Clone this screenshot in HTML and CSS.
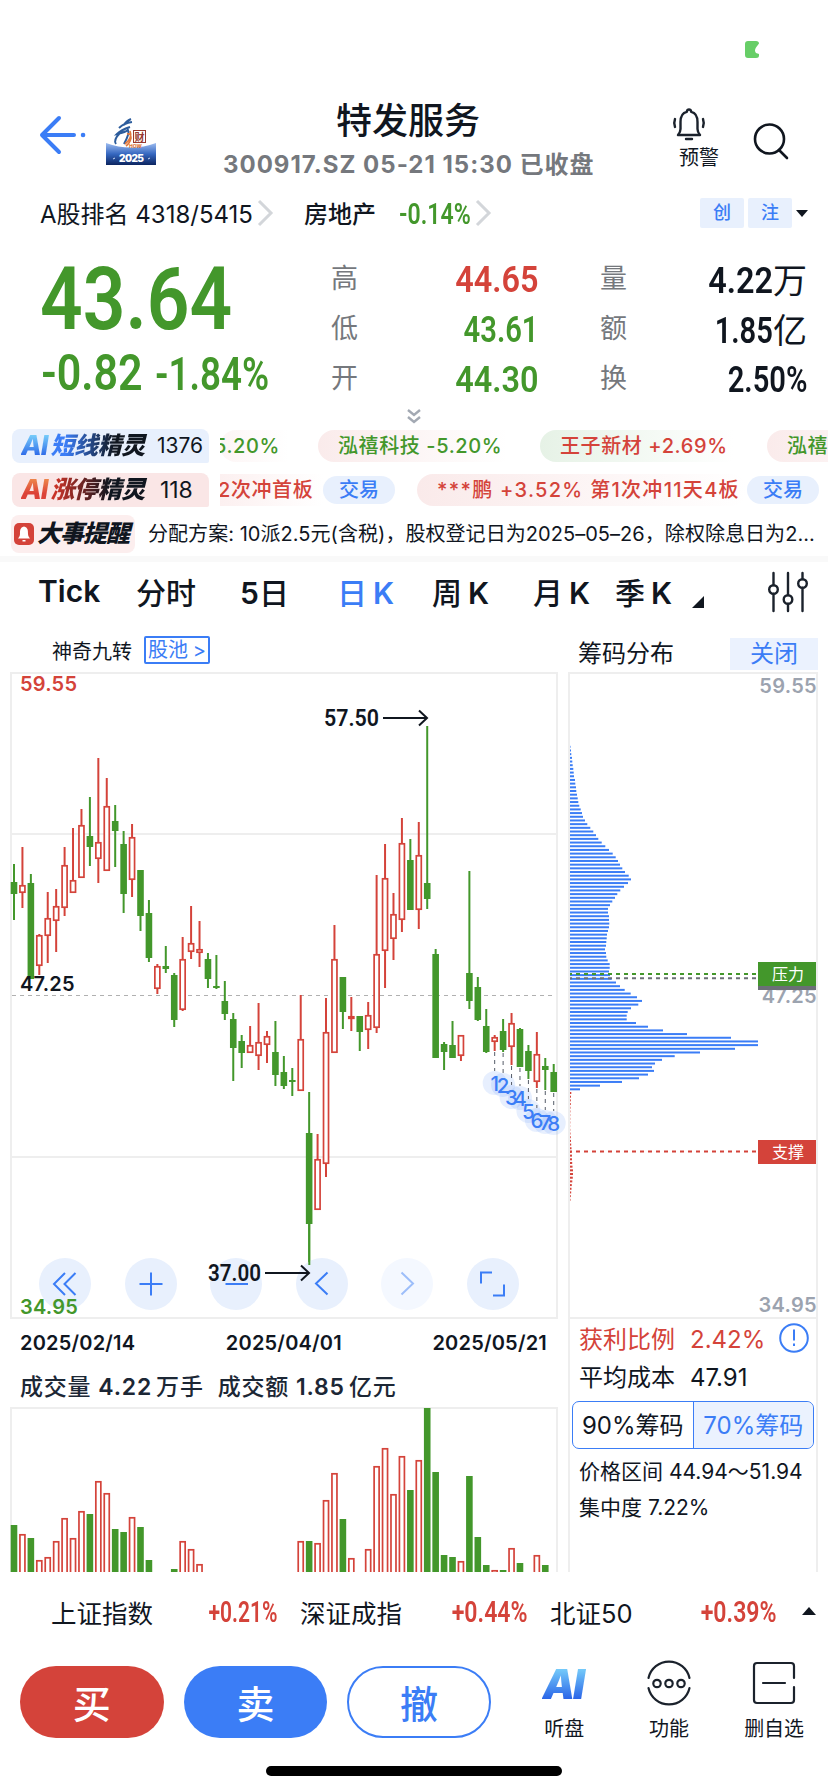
FILE: index.html
```html
<!DOCTYPE html>
<html lang="zh-CN">
<head>
  <meta charset="UTF-8">
  <title>特发服务</title>
  <meta name="viewport" content="width=device-width, initial-scale=1">
  <link rel="stylesheet" href="styles.css">
</head>
<body>
<div class="status">
  <svg width="14" height="17" viewBox="0 0 14 17"><path d="M3 0h8q3 0 3 2.500l-3 4q-2 3 0 5.500l3 1v1.500q0 2.500-3 2.500H3q-3 0-3-3V3q0-3 3-3z" fill="#67ce67"/></svg>
</div>

<header class="header">
  <div class="header-left">
    <svg class="back" width="48" height="40" viewBox="0 0 48 40" fill="none" stroke="#3b7df6" stroke-width="4" stroke-linecap="round" stroke-linejoin="round">
      <path d="M20 3L3 20l17 17M3 20h32"/><path d="M44 20h.1" stroke-width="4.500"/>
    </svg>
    <svg class="logo" width="50" height="47" viewBox="0 0 50 47">
      <defs><linearGradient id="lg" x1="0" y1="0" x2="0" y2="1"><stop offset="0" stop-color="#9dbcf0"/><stop offset=".5" stop-color="#3567c0"/><stop offset="1" stop-color="#0c2560"/></linearGradient></defs>
      <path d="M0 25q25 9 50 0v22H0z" fill="url(#lg)"/>
      <path d="M25 1q-5 2-7 6M26 4q-8 1-13 6M24 9q-9 3-13 7q9-2 11-4q2 3-4 14M14 15q-7 7-4 11" fill="none" stroke="#2c5c9c" stroke-width="2"/>
      <path d="M24 13q3 7-5 13M21 16q4-1 4 4q-1 5-5 8" fill="none" stroke="#e0783c" stroke-width="1.600"/>
      <rect x="27.500" y="12.500" width="12" height="12" fill="#fff" stroke="#983a30"/>
      <text x="28.500" y="22.500" class="logo-cai">财</text>
      <text x="23" y="30" class="logo-how">HOW</text>
      <text x="13" y="44" class="logo-year" textLength="25">2025</text>
      <path d="M7 41l2-1M42 41l2-1" stroke="#cfdcf5"/>
    </svg>
  </div>
  <div class="header-title">
    <h1>特发服务</h1>
    <p>300917.SZ 05-21 15:30 已收盘</p>
  </div>
  <div class="header-right">
    <div class="alert">
      <svg width="34" height="34" viewBox="0 0 34 34" fill="none" stroke="#1b222c" stroke-width="2.400" stroke-linecap="round" stroke-linejoin="round">
        <path d="M17 2.500q-1.800 0-2.200 2.300C9.500 6 8.500 10 8.500 15v7q0 3-2.500 6h22q-2.500-3-2.500-6v-7c0-5-1-9-6.300-10.200Q18.800 2.500 17 2.500z"/>
        <path d="M14 32h6M3 12q-1.500 4 0 8M31 12q1.500 4 0 8"/>
      </svg>
      <span>预警</span>
    </div>
    <svg class="search" width="36" height="38" viewBox="0 0 36 38" fill="none" stroke="#10161f" stroke-width="2.600" stroke-linecap="round"><circle cx="16.500" cy="17" r="14.500"/><path d="M26 28l8 8"/></svg>
  </div>
</header>

<div class="rank">
  <span class="rank-all">A股排名 4318/5415</span>
  <svg class="chev" width="18" height="28" viewBox="0 0 18 28"><path d="M3 2l12 12L3 26"/></svg>
  <span class="rank-sector">房地产</span>
  <span class="din rank-pct green">-0.14%</span>
  <svg class="chev" width="18" height="28" viewBox="0 0 18 28"><path d="M3 2l12 12L3 26"/></svg>
  <div class="tags"><b>创</b><b>注</b><i></i></div>
</div>

<section class="quote">
  <div class="price">
    <div class="din price-now">43.64</div>
    <div class="price-diff"><span class="din d1">-0.82</span><span class="din d2">-1.84%</span></div>
  </div>
  <dl class="stats">
    <dt>高</dt><dd class="red"><span class="din">44.65</span></dd>
    <dt>低</dt><dd class="green"><span class="din narrow">43.61</span></dd>
    <dt>开</dt><dd class="green"><span class="din">44.30</span></dd>
  </dl>
  <dl class="stats stats-2">
    <dt>量</dt><dd><span class="din">4.22</span><em>万</em></dd>
    <dt>额</dt><dd><span class="din narrow">1.85</span><em>亿</em></dd>
    <dt>换</dt><dd><span class="din narrow">2.50%</span></dd>
  </dl>
</section>
<div class="expand">
  <svg width="14" height="17" viewBox="0 0 14 17" fill="none" stroke="#a3a9b3" stroke-width="2.400"><path d="M1 2l6 5 6-5M1 9l6 5 6-5"/></svg>
</div>

<section class="tickers">
  <div class="ticker">
    <div class="ticker-label blue-bg"><b class="ai ai-blue">AI</b><b class="name name-blue">短线精灵</b><span>1376</span></div>
    <div class="ticker-track">
      <span class="chip c-first green">5.20%</span>
      <span class="chip c-red green">泓禧科技 -5.20%</span>
      <span class="chip c-green red">王子新材 +2.69%</span>
      <span class="chip c-red green">泓禧科技</span>
    </div>
  </div>
  <div class="ticker">
    <div class="ticker-label red-bg"><b class="ai ai-red">AI</b><b class="name name-red">涨停精灵</b><span class="n118">118</span></div>
    <div class="ticker-track track-2">
      <span class="chip b-first red">2次冲首板</span><span class="trade">交易</span>
      <span class="chip b-long red">***鹏 +3.52% 第1次冲11天4板</span><span class="trade">交易</span>
    </div>
  </div>
  <div class="ticker notice">
    <div class="notice-label">
      <svg width="20" height="22" viewBox="0 0 20 22"><rect width="20" height="22" rx="5" fill="#d4433a"/><path d="M10 3.500c-4 1-4 4-4 7.500 0 2-1 3-2 4.500h12c-1-1.500-2-2.500-2-4.500 0-3.500 0-6.500-4-7.500zM8.500 17h3v1.500h-3z" fill="#fff"/></svg>
      <b>大事提醒</b>
    </div>
    <p>分配方案: 10派2.5元(含税)，股权登记日为2025–05–26，除权除息日为2...</p>
  </div>
</section>

<nav class="tabs">
  <span class="t1"><b>Tick</b></span><span class="t2">分时</span><span class="t3"><b>5</b>日</span><span class="t4 on">日 <b>K</b></span><span class="t5">周 <b>K</b></span><span class="t6">月 <b>K</b></span><span class="t7">季 <b>K</b></span>
  <i class="corner"></i>
  <svg width="42" height="42" viewBox="0 0 42 42" fill="none" stroke="#1b222c" stroke-width="2.400" stroke-linecap="round">
    <path d="M6.500 2v12M6.500 23v17M21 2v22M21 33v7M35.500 2v6M35.500 17v23"/><circle cx="6.500" cy="18.500" r="4.300"/><circle cx="21" cy="28.500" r="4.300"/><circle cx="35.500" cy="12.500" r="4.300"/>
  </svg>
</nav>

<main class="charts">
  <div class="col-k">
    <div class="k-head"><span>神奇九转</span><a>股池 &gt;</a></div>
    <svg id="kline" class="block" width="548" height="648" viewBox="10 672 548 648"></svg>
    <div class="dates"><span>2025/02/14</span><span>2025/04/01</span><span>2025/05/21</span></div>
    <div class="vol-head">成交量 <b>4.22</b><s></s>万手<s class="wide"></s>成交额 <b>1.85</b><s></s>亿元</div>
    <svg id="volume" class="block" width="548" height="166" viewBox="10 1406 548 166"></svg>
  </div>
  <div class="col-chip">
    <div class="chip-head"><span>筹码分布</span><a>关闭</a></div>
    <svg id="chips" class="block" width="250" height="648" viewBox="568 672 250 648"></svg>
    <div class="chip-info">
      <div class="profit"><span>获利比例</span><span>2.42%</span>
        <svg width="30" height="30" viewBox="0 0 30 30" fill="none" stroke="#3b7df6" stroke-width="2"><circle cx="15" cy="15" r="13.800"/><path d="M15 6.500v11M15 20.500v2.500"/></svg>
      </div>
      <div class="cost"><span>平均成本</span><span>47.91</span></div>
      <div class="switch"><span>90%筹码</span><span class="on">70%筹码</span></div>
      <p>价格区间 44.94～51.94</p>
      <p>集中度 7.22%</p>
    </div>
  </div>
</main>

<div class="indices">
  <div class="i1"><span>上证指数</span><span class="din red">+0.21%</span></div>
  <div class="i2"><span>深证成指</span><span class="din red">+0.44%</span></div>
  <div class="i3"><span>北证50</span><span class="din red">+0.39%</span></div>
  <i></i>
</div>

<footer class="actions">
  <button class="buy">买</button>
  <button class="sell">卖</button>
  <button class="cancel">撤</button>
  <div class="act a1"><b class="ai ai-blue">AI</b><span>听盘</span></div>
  <div class="act a2">
    <svg width="46" height="46" viewBox="0 0 46 46" fill="none" stroke="#1b222c" stroke-width="2.200" stroke-linecap="round"><path d="M2.500 18a21 21 0 0 1 41 0M2.500 28a21 21 0 0 0 41 0"/><circle cx="11" cy="23.500" r="3.700"/><circle cx="23" cy="23.500" r="3.700"/><circle cx="35" cy="23.500" r="3.700"/></svg>
    <span>功能</span>
  </div>
  <div class="act a3">
    <svg width="46" height="46" viewBox="0 0 46 46" fill="none" stroke="#1b222c" stroke-width="2.200" stroke-linecap="round"><path d="M43 18V6q0-3-3-3H6Q3 3 3 6v34q0 3 3 3h34q3 0 3-3V27M12 23h22"/></svg>
    <span>删自选</span>
  </div>
</footer>
<div class="home"></div>
<script src="script.js"></script>
</body>
</html>
```
FILE: styles.css
```css
* { box-sizing: border-box; }
body {
  margin: 0;
  width: 828px;
  height: 1792px;
  overflow: hidden;
  background: #fff;
  color: #10161f;
  font-family: Inter, "Noto Sans CJK SC", sans-serif;
}
h1, p, dl, dd, dt { margin: 0; font-weight: inherit; }
.red { color: #d4433a; }
.green { color: #43972b; }
.block { display: block; overflow: visible; }
.din {
  font-family: Roboto, "Noto Sans CJK SC", sans-serif;
  font-weight: 600;
  display: inline-block;
  transform: scaleX(.88);
  transform-origin: left;
  white-space: nowrap;
}
.status {
  height: 90px;
  padding: 41px 0 0 745px;
}
.status svg { display: block; }

/* header */
.header {
  height: 100px;
  display: flex;
}
.header-left {
  width: 223px;
  padding: 25px 0 0 39px;
  display: flex;
}
.logo { margin: 3px 0 0 19px; }
.logo-cai { font-size: 10px; font-weight: 700; fill: #983a30; }
.logo-how { font-size: 5px; font-weight: 800; fill: #e0783c; }
.logo-year { font-size: 10px; font-weight: 900; fill: #fff; }
.header-title {
  width: 370px;
  text-align: center;
  white-space: nowrap;
}
.header-title h1 {
  font-size: 36px;
  line-height: 44px;
  margin-top: 9px;
  font-weight: 500;
}
.header-title p {
  font-size: 24px;
  line-height: 30px;
  margin-top: 7px;
  font-weight: 700;
  color: #75787d;
  letter-spacing: 1px;
}
.header-right {
  display: flex;
  padding: 17px 0 0 79px;
}
.alert {
  width: 50px;
  font-size: 20px;
  line-height: 24px;
}
.alert svg { display: block; margin-bottom: 5px; }
.alert span { margin-left: 7px; }
.search { margin: 15px 0 0 31px; }

/* rank row */
.rank {
  height: 46px;
  padding-left: 40px;
  display: flex;
  align-items: center;
  font-size: 24px;
  white-space: nowrap;
}
.rank-all { width: 216px; padding-bottom: 2px; }
.chev { fill: none; stroke: #d3d6da; stroke-width: 3; }
.rank-sector { font-weight: 500; margin-left: 30px; width: 95px; padding-bottom: 2px; }
.rank-pct { font-size: 30px; width: 75px; transform: scaleX(.77); }
.tags {
  margin-left: 208px;
  display: flex;
  gap: 4px;
  align-items: center;
}
.tags b {
  width: 44px;
  height: 30px;
  line-height: 29px;
  text-align: center;
  font-size: 18px;
  font-weight: 500;
  background: #e8f0fd;
  color: #3b7df6;
  border-radius: 2px;
}
.tags i {
  border: 6px solid transparent;
  border-top: 7px solid #10161f;
  border-bottom: 0;
}

/* quote */
.quote {
  height: 172px;
  display: flex;
  padding: 18px 0 0 40px;
}
.price { width: 291px; color: #43972b; }
.price-now {
  display: block;
  font-size: 88px;
  line-height: 90px;
  transform: scaleX(.85);
}
.price-diff { display: flex; align-items: baseline; line-height: 58px; padding-left: 1px; }
.d1 { font-size: 50px; width: 114px; transform: scaleX(.86); }
.d2 { font-size: 46px; transform: scaleX(.8); }
.stats {
  width: 207px;
  display: grid;
  grid-template-columns: 60px 1fr;
  grid-auto-rows: 50px;
  line-height: 50px;
}
.stats dt { font-size: 27px; color: #75787d; }
.stats dd { font-size: 36px; text-align: right; white-space: nowrap; }
.stats dd .din { transform-origin: right; transform: scaleX(.9); }
.stats dd .narrow { transform: scaleX(.81); }
.stats-2 { margin-left: 62px; }
.stats em { font-style: normal; font-size: 34px; font-family: "Noto Sans CJK SC", sans-serif; }
.expand { height: 21px; padding-left: 407px; }
.expand svg { display: block; }

/* tickers */
.tickers {
  height: 133px;
  border-bottom: 6px solid #f9f9f9;
}
.ticker {
  height: 34px;
  margin-bottom: 10px;
  display: flex;
  white-space: nowrap;
  line-height: 34px;
}
.ticker-label {
  margin-left: 12px;
  width: 197px;
  padding-left: 9px;
  display: flex;
  border-radius: 8px 8px 2px 8px;
  font-size: 21px;
}
.ticker-label span { margin-left: 9px; }
.ticker-label .n118 { margin-left: 12px; font-size: 23px; }
.blue-bg { background: #e8f0fd; }
.red-bg { background: #fae6e6; }
.ai {
  font-style: italic;
  font-weight: 800;
  font-size: 27px;
  letter-spacing: -1px;
  padding-right: 3px;
  background-clip: text;
  -webkit-background-clip: text;
  color: transparent;
}
.ai-blue { background-image: linear-gradient(#7ad1fb 15%, #2c67e8 80%); }
.ai-red { background-image: linear-gradient(#ee8a4c 15%, #dc4238 60%); }
.name {
  font-style: italic;
  font-weight: 900;
  font-size: 24px;
  letter-spacing: -.4px;
  padding-right: 3px;
  background-clip: text;
  -webkit-background-clip: text;
  color: transparent;
}
.name-blue { background-image: linear-gradient(90deg, #3b7df6 15%, #10161f 65%); }
.name-red { background-image: linear-gradient(90deg, #c93328 5%, #10161f 60%); }
.ticker-track {
  margin-left: 11px;
  width: 608px;
  overflow: hidden;
  display: flex;
  padding-top: 1px;
}
.chip {
  flex: none;
  height: 32px;
  line-height: 32px;
  font-size: 20px;
  font-weight: 500;
  letter-spacing: .6px;
  padding-left: 20px;
  border-radius: 16px;
}
.c-first { width: 98px; padding: 0; text-indent: -6px; background: linear-gradient(90deg, #fdf5f5, #fff 70%); }
.c-red { width: 222px; background: linear-gradient(90deg, #faebeb, #fff 85%); }
.c-green { width: 227px; background: linear-gradient(90deg, #e6f2e6, #fff 85%); }
.b-first { width: 103px; padding: 0; text-indent: -2px; border-radius: 0; background: linear-gradient(90deg, #fcf0f0, #fff); }
.b-long { width: 330px; margin-left: 22px; letter-spacing: 1.300px; background: linear-gradient(90deg, #faeaea, #fff); }
.trade {
  flex: none;
  width: 72px;
  height: 28px;
  margin-top: 2px;
  line-height: 28px;
  text-align: center;
  font-size: 20px;
  font-weight: 500;
  border-radius: 14px;
  background: #e8f0fd;
  color: #3b7df6;
}
.notice { height: 38px; line-height: 38px; margin-top: -2px; }
.notice-label {
  margin-left: 11px;
  width: 124px;
  padding-left: 3px;
  display: flex;
  align-items: center;
  background: #fceeee;
  border-radius: 8px;
}
.notice-label b {
  font-size: 24px;
  font-weight: 900;
  font-style: italic;
  letter-spacing: -1px;
  margin-left: 3px;
}
.notice p { margin-left: 13px; font-size: 20px; letter-spacing: .05px; }

/* period tabs */
.tabs {
  height: 70px;
  display: flex;
  align-items: center;
  font-size: 30px;
  font-weight: 500;
  padding: 0 0 10px 38px;
  white-space: nowrap;
}
.tabs span { padding-bottom: 3px; }
.tabs b { font-weight: 600; }
.tabs .on { color: #3b7df6; }
.t1 { width: 98px; }
.t2 { width: 104px; }
.t3 { width: 97px; }
.t4 { width: 95px; }
.t5 { width: 101px; }
.t6 { width: 82px; }
.t7 { width: 77px; }
.t4, .t5, .t6, .t7 { word-spacing: -2px; }
.corner {
  margin-top: 20px;
  border-left: 12px solid transparent;
  border-bottom: 12px solid #10161f;
}
.tabs svg { margin-left: 63px; }

/* charts */
.charts {
  height: 940px;
  display: flex;
  gap: 10px;
  padding-left: 10px;
}
.col-k { width: 548px; }
.col-chip { width: 250px; }
.k-head {
  height: 40px;
  display: flex;
  align-items: center;
  padding: 0 0 4px 42px;
  font-size: 20px;
}
.k-head a {
  margin-left: 12px;
  width: 66px;
  height: 28px;
  line-height: 25px;
  border: 2px solid #3b7df6;
  border-radius: 2px;
  color: #3b7df6;
  font-size: 20px;
  word-spacing: -1px;
  text-align: center;
  white-space: nowrap;
}
.chip-head {
  height: 40px;
  display: flex;
  padding: 6px 0 0 10px;
  font-size: 24px;
  line-height: 31px;
}
.chip-head span { width: 152px; }
.chip-head a {
  width: 88px;
  height: 32px;
  text-align: center;
  background: #ebf2fe;
  color: #3b7df6;
}
.dates {
  height: 46px;
  display: flex;
  justify-content: space-between;
  padding: 0 11px 0 10px;
  line-height: 46px;
  font-size: 20px;
  font-weight: 600;
  letter-spacing: .2px;
}
.vol-head {
  height: 40px;
  line-height: 43px;
  padding-left: 10px;
  font-size: 23px;
  font-weight: 500;
  letter-spacing: .8px;
  color: #1c2735;
  white-space: nowrap;
}
.vol-head b { font-weight: 600; }
.vol-head s { display: inline-block; width: 4px; }
.vol-head .wide { width: 14px; }
.chip-info {
  height: 252px;
  border: 2px solid #eee;
  border-top: 0;
  border-bottom: 0;
  font-size: 24px;
  white-space: nowrap;
}
.profit, .cost {
  display: flex;
  padding-left: 9px;
  line-height: 39px;
}
.profit { color: #d4433a; height: 38px; }
.profit span, .cost span { width: 111px; }
.profit span:nth-child(2) { width: 89px; }
.profit svg { margin-top: 3px; }
.cost { height: 43px; }
.switch {
  margin: 0 2px 5px;
  height: 48px;
  display: flex;
  line-height: 48px;
  border: 1px solid #3b7df6;
  border-radius: 7px;
  text-align: center;
}
.switch span { flex: 1; }
.switch .on {
  color: #3b7df6;
  background: #ebf2fe;
  border-left: 1px solid #3b7df6;
  border-radius: 0 7px 7px 0;
}
.chip-info p { padding-left: 9px; font-size: 21px; line-height: 35.500px; }

/* svg labels */
.ax { font-size: 20px; font-weight: 600; letter-spacing: .2px; }
.ax-r { font-size: 20px; font-weight: 600; letter-spacing: .3px; fill: #9ca3af; text-anchor: end; }
.peak { font-family: Roboto, sans-serif; font-size: 24.500px; font-weight: 600; fill: #10161f; }
.nine { font-size: 20.500px; font-weight: 500; fill: #3b7df6; text-anchor: middle; }
.badge { font-size: 16px; fill: #fff; text-anchor: middle; }

/* bottom */
.indices {
  height: 80px;
  display: flex;
  align-items: center;
  padding: 0 0 2px 51px;
  font-size: 25.500px;
  white-space: nowrap;
}
.indices div { display: flex; justify-content: space-between; align-items: center; margin-right: 22px; }
.indices .din { font-size: 30px; transform: scaleX(.77); transform-origin: right; }
.i1 { width: 227px; }
.i2 { width: 228px; }
.i3 { width: 227px; }
.indices .i1 .din { transform: scaleX(.7); }
.indices i {
  margin-left: 3px;
  border: 7px solid transparent;
  border-bottom: 8px solid #10161f;
  border-top: 0;
}
.actions {
  height: 114px;
  display: flex;
  padding: 14px 0 0 20px;
}
.actions button {
  width: 144px;
  height: 72px;
  margin-right: 20px;
  border: 0;
  border-radius: 36px;
  font: 500 38px/68px "Noto Sans CJK SC", sans-serif;
  padding: 0;
  color: #fff;
}
.actions .buy { background: #d4433a; }
.actions .sell { background: #3b7df6; }
.actions .cancel { background: #fff; color: #3b7df6; border: 2px solid #3b7df6; }
.act {
  width: 106px;
  margin-top: -6px;
  display: flex;
  flex-direction: column;
  align-items: center;
  font-size: 20px;
}
.act span { margin-top: 9px; line-height: 28px; }
.act .ai { font-size: 41px; line-height: 48px; margin-bottom: -2px; font-weight: 900; letter-spacing: -2px; }
.act svg { display: block; }
.a1 { width: 107px; }
.a2 { width: 103px; }
.a3 { width: 108px; }
.home {
  width: 296px;
  height: 10px;
  margin: 0 0 0 266px;
  border-radius: 5px;
  background: #000;
}
```
FILE: script.js
```js
const RED = '#d4433a', GREEN = '#43972b', BLUE = '#3b7df6', GRID = '#eee';
const X0 = 14, STEP = 8.433;

// [up?, high, body top, body bottom, low]
const candles = [
  [0,864,882,894,920],[1,847,885,893,908],[0,874,883,979,979],[1,934,935,966,975],[1,892,918,936,963],
  [1,889,906,921,952],[1,847,865,908,916],[1,828,880,893,893],[1,809,825,878,878],[0,797,836,847,866],
  [1,758,842,859,883],[1,778,806,871,871],[0,805,821,831,867],[0,831,844,894,913],[1,824,837,880,897],
  [0,870,870,916,931],[0,900,913,958,962],[1,964,966,989,994],[0,946,966,969,973],[0,973,975,1020,1027],
  [1,937,959,1010,1011],[1,906,943,952,959],[1,921,949,953,967],[0,953,959,979,988],[0,955,986,988,989],
  [0,981,1001,1014,1020],[0,1013,1019,1048,1081],[0,1035,1041,1053,1068],[1,1026,1045,1053,1053],[1,1003,1042,1056,1070],
  [1,1031,1036,1045,1063],[0,1021,1052,1075,1086],[0,1056,1072,1086,1089],[0,1068,1080,1082,1096],[1,995,1039,1091,1091],
  [0,1092,1133,1224,1265],[1,1134,1159,1210,1210],[1,998,1032,1164,1177],[1,925,959,1053,1053],[0,977,977,1012,1029],
  [1,997,1016,1019,1031],[0,1016,1016,1032,1051],[1,1002,1015,1030,1049],[1,875,954,1028,1033],[1,844,878,951,988],
  [1,893,914,939,960],[1,818,843,920,932],[0,839,860,910,910],[1,822,855,910,929],[0,726,883,899,909],
  [0,949,954,1058,1058],[0,1042,1044,1052,1070],[0,1021,1045,1058,1058],[1,1035,1035,1056,1061],[0,871,973,1001,1009],
  [0,977,987,1020,1021],[0,1009,1026,1052,1053],[1,1035,1037,1042,1051],[0,1019,1031,1050,1052],[1,1013,1023,1047,1065],
  [0,1028,1029,1067,1067],[0,1045,1051,1071,1079],[1,1032,1054,1082,1088],[0,1058,1066,1070,1090],[0,1064,1072,1092,1092]
];
const volumes = [47,38,34,12,15,31,54,34,61,58,91,79,43,40,55,45,12,0,0,3,31,23,8,0,0,0,0,0,0,0,0,0,0,0,
  31,31,29,72,99,53,14,0,23,106,124,78,116,82,112,164,100,17,15,11,96,35,7,2,2,24,9,0,17,7,0];
const loss = [.5,1,1.3,2,2.3,2.7,3.3,3.7,4,5,5.3,6,6.3,7,7.7,8.3,9.3,10.7,12,13,15,17.3,20.3,23.3,26,28.3,31.7,35.3,39,42.7,
  45.7,48,50,52.3,55,58.7,61,58,54,50.3,47.3,45,42.3,40,38,38,39,39,39.3,39,38,37,36.7,36.3,36,35,36,36.3,37.7,39.7,39.7,
  39,40,41.7,46,50,54.7,60.7,67,72,68.3,61,57.7,56.7,56.7,66,78,93,117,161,188,188,165,130,104.7,92,85,82,84,78,69,52,30,10];
const profit = [1.3,1,.8,.8,.5,.4,.3,.3,.3,.2,.3,.5,.8,1,1.2,1.5,1.7,2,2,2.2,2.5,3,3,2.8,2.3,1.8,1.5,1.2,.8,.5];
const nine = [1083,1085,1097,1098,1111,1120,1122,1123];

const rect = (x, y, w, h, fill, extra = '') => `<rect x="${x}" y="${y}" width="${w}" height="${h}" fill="${fill}" ${extra}/>`;
const line = (x1, y1, x2, y2, c, w = 2, extra = '') => `<line x1="${x1}" y1="${y1}" x2="${x2}" y2="${y2}" stroke="${c}" stroke-width="${w}" ${extra}/>`;
const text = (x, y, cls, s, extra = '') => `<text x="${x}" y="${y}" class="${cls}" ${extra}>${s}</text>`;
const frame = (x, y, w, h) => rect(x + 1, y + 1, w - 2, h - 2, 'none', `stroke="${GRID}" stroke-width="2"`);

function drawKline() {
  let s = frame(10, 672, 548, 647);
  s += line(12, 834, 556, 834, GRID) + line(12, 1157, 556, 1157, GRID);
  s += line(12, 995.5, 553, 995.5, '#b0b0b0', 1, 'stroke-dasharray="4 4"');
  candles.forEach(([up, hi, top, bot, lo], i) => {
    const x = X0 + i * STEP;
    if (up) {
      s += line(x, hi, x, top, RED) + line(x, bot, x, lo, RED);
      s += rect(x - 2.5, top + .8, 5, Math.max(bot - top - 1.6, 1.5), '#fff', `stroke="${RED}" stroke-width="1.7"`);
    } else {
      s += line(x, hi, x, lo, GREEN) + rect(x - 3.3, top, 6.6, bot - top, GREEN);
    }
  });

  nine.forEach((y, n) => {
    const i = 57 + n, x = X0 + i * STEP;
    s += line(x, candles[i][4] + 1, x, y - 12, '#555c68', 1, 'stroke-dasharray="4 4"');
    s += `<circle cx="${x}" cy="${y}" r="12" fill="${BLUE}" opacity=".12"/>`;
  });
  nine.forEach((y, n) => { s += text(X0 + (57 + n) * STEP, y + 7.5, 'nine', n + 1); });

  // toolbar under the price labels
  [65, 151, 236, 322, 407, 493].forEach((x, i) => {
    s += `<circle cx="${x}" cy="1284" r="26" fill="${i == 4 ? '#f4f8ff' : '#e8f0fd'}"/>`;
  });
  const icons = [
    'M65 1273l-11 11 11 11M75.500 1273l-11 11 11 11', 'M139.500 1284h23M151 1272.500v23', 'M225.500 1284h22.500',
    'M327.500 1272.500l-11.500 11 11.500 11', 'M401.500 1272.500l11.500 11-11.500 11', 'M481 1283.500v-11h11M504 1284.500v11h-11'
  ];
  icons.forEach((d, i) => {
    s += `<path d="${d}" fill="none" stroke="${i == 4 ? '#9dbefa' : BLUE}" stroke-width="2"/>`;
  });
  s += line(309.300, 1224, 309.300, 1265, GREEN);

  s += text(20, 691, 'ax', '59.55', `fill="${RED}"`);
  s += text(20, 991, 'ax', '47.25', 'fill="#10161f"');
  s += text(20, 1314, 'ax', '34.95', `fill="${GREEN}"`);
  s += text(324, 726, 'peak', '57.50', 'textLength="55" lengthAdjust="spacingAndGlyphs"');
  s += text(208, 1281, 'peak', '37.00', 'textLength="53" lengthAdjust="spacingAndGlyphs"');
  s += '<path d="M383 718h43M419 710.500l8 7.500-8 7.500M265 1273h43M301 1265.500l8 7.500-8 7.500" fill="none" stroke="#10161f" stroke-width="2"/>';
  document.getElementById('kline').innerHTML = s;
}

function drawVolume() {
  // the base of the bars sits below the visible strip
  let s = '<clipPath id="strip"><rect x="10" y="1400" width="548" height="172"/></clipPath><g clip-path="url(#strip)">';
  s += frame(10, 1407, 548, 200);
  volumes.forEach((h, i) => {
    if (!h) return;
    const x = X0 + i * STEP;
    s += candles[i][0]
      ? rect(x - 2.5, 1572.8 - h, 5, h + 5, '#fff', `stroke="${RED}" stroke-width="1.7"`)
      : rect(x - 3.3, 1572 - h, 6.6, h, GREEN);
  });
  document.getElementById('volume').innerHTML = s + '</g>';
}

function drawChips() {
  let s = frame(568, 672, 250, 647);
  loss.forEach((w, i) => { s += rect(570, 745.8 + i * 3.683, w, 2, BLUE); });
  profit.forEach((w, i) => { s += rect(570, 745.8 + (i + 94) * 3.683, w, 2, RED); });
  s += line(570, 974, 756, 974, GREEN, 2, 'stroke-dasharray="4 4" stroke-dashoffset="2"');
  s += line(570, 978.3, 756, 978.3, '#6b6f76', 2, 'stroke-dasharray="4 4" stroke-dashoffset="2"');
  s += line(570, 1151.6, 756, 1151.6, RED, 2, 'stroke-dasharray="4 4" stroke-dashoffset="2"');
  s += text(817, 693, 'ax-r', '59.55') + text(817, 1003, 'ax-r', '47.25') + text(817, 1312, 'ax-r', '34.95');
  s += rect(758, 966, 58, 24, '#6b6f76') + rect(758, 962, 58, 24, GREEN) + rect(758, 1140, 58, 24, RED);
  s += text(788, 980, 'badge', '压力') + text(788, 1158, 'badge', '支撑');
  s += line(569, 1319, 569, 1322, GRID) + line(817, 1319, 817, 1322, GRID);
  document.getElementById('chips').innerHTML = s;
}

drawKline();
drawVolume();
drawChips();
```
